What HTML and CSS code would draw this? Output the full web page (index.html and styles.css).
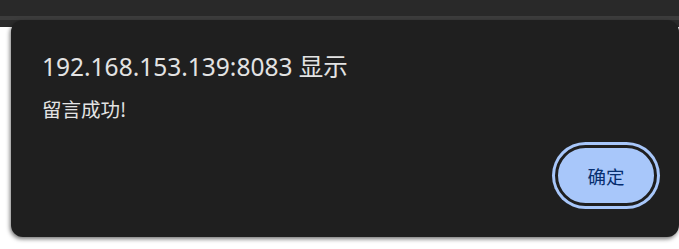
FILE: index.html
```html
<!DOCTYPE html>
<html lang="zh-CN">
<head>
<meta charset="utf-8">
<title>alert</title>
<link rel="stylesheet" href="styles.css">
</head>
<body>
<div class="page">
  <div class="topbar"></div>
  <div class="topline"></div>
  <div class="strip"></div>
</div>
<div class="dialog" role="alertdialog">
  <div class="title">192.168.153.139:8083 显示</div>
  <div class="message">留言成功!</div>
  <div class="actions">
    <button class="ok">确定</button>
  </div>
</div>
</body>
</html>
```
FILE: styles.css
```css
html, body {
  margin: 0;
  padding: 0;
  background: #ffffff;
  width: 679px;
  height: 249px;
  overflow: hidden;
}
.page {
  display: flex;
  flex-direction: column;
}
.topbar {
  height: 16px;
  background: #292929;
}
.topline {
  height: 4px;
  background: #3c3c3c;
}
.strip {
  height: 7px;
  background: #2b2b2b;
}
.dialog {
  position: absolute;
  left: 11px;
  top: 20px;
  width: 668px;
  height: 217px;
  box-sizing: border-box;
  background: #1f1f1f;
  border-radius: 12px;
  box-shadow: -1px 2px 4px rgba(0,0,0,0.55);
  padding: 31px 19px 0 31px;
  display: flex;
  flex-direction: column;
  font-family: "Noto Sans", "Noto Sans CJK SC", sans-serif;
  color: #e3e3e3;
}
.title {
  font-size: 24.5px;
  line-height: 32px;
}
.message {
  margin-top: 14px;
  font-size: 19.5px;
  line-height: 24px;
  font-family: "Noto Sans CJK SC", sans-serif;
}
.actions {
  display: flex;
  justify-content: flex-end;
  margin-top: 21px;
}
.ok {
  width: 102px;
  height: 61px;
  box-sizing: border-box;
  margin: 3px;
  border: 3px solid #1f1f1f;
  border-radius: 31px;
  background: #a8c7fa;
  box-shadow: 0 0 0 3px #a8c7fa;
  color: #062e6f;
  font-family: "Noto Sans CJK SC", sans-serif;
  font-size: 18.5px;
  padding: 0;
}
```
